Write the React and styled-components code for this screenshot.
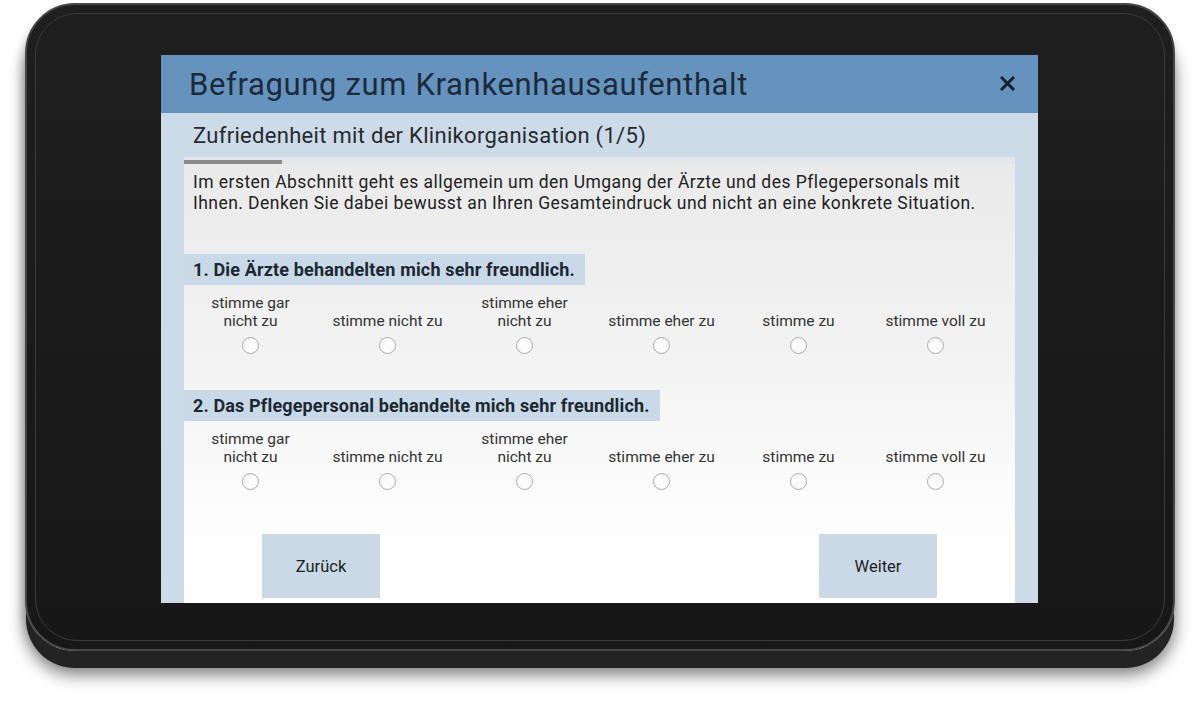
import React from "react";
import styled, { createGlobalStyle } from "styled-components";

const Global = createGlobalStyle`
  html, body { margin: 0; padding: 0; background: #ffffff; }
  body { font-family: Roboto, "Noto Sans", "Liberation Sans", sans-serif; }
  * { box-sizing: border-box; }
`;

const Stage = styled.div`
  width: 1200px;
  height: 714px;
  padding: 3px 0 0 25px;
  overflow: hidden;
  background: #ffffff;
`;

const Device = styled.div`
  width: 1150px;
  height: 648px;
  padding: 8px;
  border-radius: 50px;
  background: linear-gradient(180deg, #1f1f1f 0%, #1a1a1a 60%, #171717 100%);
  border: 2px solid #474747;
  box-shadow:
    0 18px 0 -1px #232323,
    0 24px 16px rgba(0, 0, 0, 0.5),
    -3px 8px 10px rgba(0, 0, 0, 0.18);
`;

const Bezel = styled.div`
  height: 100%;
  border-radius: 42px;
  border: 1px solid #3b3b3b;
  padding: 41px 126px 0 125px;
`;

const Screen = styled.div`
  width: 877px;
  height: 548px;
  display: flex;
  flex-direction: column;
  overflow: hidden;
  background: #cddbe9;
`;

const Header = styled.div`
  height: 58px;
  flex: none;
  display: flex;
  align-items: center;
  justify-content: space-between;
  padding: 0 22px 0 28px;
  background: #6693be;
`;

const Title = styled.h1`
  margin: 0;
  font-size: 31px;
  font-weight: 400;
  color: #1c2a3a;
  letter-spacing: 0.65px;
`;

const CloseButton = styled.button`
  border: 0;
  background: transparent;
  padding: 0;
  width: 18px;
  height: 18px;
  display: flex;
  align-items: center;
  justify-content: center;
  margin-top: -2px;
`;

const Body = styled.div`
  flex: 1;
  display: flex;
  flex-direction: column;
  padding: 0 23px;
  min-height: 0;
`;

const Subtitle = styled.h2`
  margin: 0;
  height: 44px;
  flex: none;
  display: flex;
  align-items: center;
  padding: 0 0 0 9px;
  font-size: 22px;
  font-weight: 400;
  letter-spacing: 0.3px;
  color: #262a2e;
`;

const ProgressTrack = styled.div`
  height: 7px;
  flex: none;
  background: #e3e7eb;
  display: flex;
  align-items: flex-end;
`;

const ProgressFill = styled.div`
  height: 4px;
  background: #8b8b8b;
`;

const Panel = styled.div`
  flex: 1;
  display: flex;
  flex-direction: column;
  background: linear-gradient(180deg, #eaeaea 0%, #f3f3f3 45%, #fdfdfd 80%, #ffffff 100%);
  padding-top: 8px;
`;

const Intro = styled.p`
  margin: 0 0 40px;
  padding: 0 9px;
  font-size: 17.5px;
  line-height: 21px;
  letter-spacing: 0.45px;
  color: #222;
`;

const QuestionLabel = styled.div`
  align-self: flex-start;
  height: 31px;
  display: flex;
  align-items: center;
  padding: 0 10px 0 9px;
  background: #c9d9e7;
  font-size: 18px;
  font-weight: 700;
  letter-spacing: 0.15px;
  color: #1d2731;
`;

const Options = styled.div`
  display: grid;
  grid-template-columns: repeat(6, 137px);
  margin: 9px 0 ${(p) => p.$after}px -2px;
`;

const Option = styled.label`
  display: flex;
  flex-direction: column;
  align-items: center;
  gap: 7px;
`;

const OptionText = styled.span`
  height: 36px;
  display: flex;
  flex-direction: column;
  justify-content: flex-end;
  text-align: center;
  font-size: 15.5px;
  line-height: 18px;
  color: #333;
`;

const Radio = styled.span`
  width: 17px;
  height: 17px;
  border-radius: 50%;
  border: 1.5px solid #a8a8a8;
  background: #fbfbfb;
`;

const ButtonRow = styled.div`
  display: flex;
  justify-content: space-between;
  padding: 0 78px;
`;

const NavButton = styled.button`
  width: 118px;
  height: 64px;
  border: 0;
  border-radius: 1px;
  background: #cbd9e6;
  font-family: Roboto, "Noto Sans", "Liberation Sans", sans-serif;
  font-size: 16.5px;
  font-weight: 400;
  color: #1a1f24;
`;

const labels = [
  ["stimme gar", "nicht zu"],
  ["stimme nicht zu"],
  ["stimme eher", "nicht zu"],
  ["stimme eher zu"],
  ["stimme zu"],
  ["stimme voll zu"],
];

const questions = [
  "1. Die Ärzte behandelten mich sehr freundlich.",
  "2. Das Pflegepersonal behandelte mich sehr freundlich.",
];

function Scale({ after }) {
  return (
    <Options $after={after}>
      {labels.map((l, i) => (
        <Option key={i}>
          <OptionText>
            {l.map((line, j) => (
              <span key={j}>{line}</span>
            ))}
          </OptionText>
          <Radio />
        </Option>
      ))}
    </Options>
  );
}

export default function App() {
  return (
    <>
      <Global />
      <Stage>
        <Device>
          <Bezel>
            <Screen>
              <Header>
                <Title>Befragung zum Krankenhausaufenthalt</Title>
                <CloseButton aria-label="Schließen">
                  <svg width="15" height="15" viewBox="0 0 15 15">
                    <path d="M2 2 L13 13 M13 2 L2 13" stroke="#16202b" strokeWidth="3" strokeLinecap="square" />
                  </svg>
                </CloseButton>
              </Header>
              <Body>
                <Subtitle>Zufriedenheit mit der Klinikorganisation (1/5)</Subtitle>
                <ProgressTrack>
                  <ProgressFill style={{ width: `${(1 / 8.5) * 100}%` }} />
                </ProgressTrack>
                <Panel>
                  <Intro>
                    Im ersten Abschnitt geht es allgemein um den Umgang der Ärzte und des Pflegepersonals mit
                    <br />
                    Ihnen. Denken Sie dabei bewusst an Ihren Gesamteindruck und nicht an eine konkrete Situation.
                  </Intro>
                  <QuestionLabel>{questions[0]}</QuestionLabel>
                  <Scale after={36} />
                  <QuestionLabel>{questions[1]}</QuestionLabel>
                  <Scale after={44} />
                  <ButtonRow>
                    <NavButton>Zurück</NavButton>
                    <NavButton>Weiter</NavButton>
                  </ButtonRow>
                </Panel>
              </Body>
            </Screen>
          </Bezel>
        </Device>
      </Stage>
    </>
  );
}
